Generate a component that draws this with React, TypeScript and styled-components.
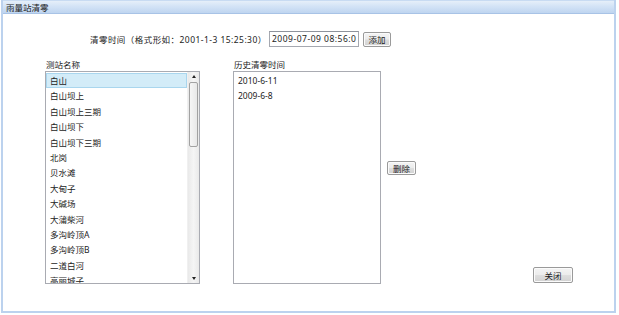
import React from "react";
import styled, { createGlobalStyle } from "styled-components";

const stations = [
  "白山",
  "白山坝上",
  "白山坝上三期",
  "白山坝下",
  "白山坝下三期",
  "北岗",
  "贝水滩",
  "大甸子",
  "大碱场",
  "大蒲柴河",
  "多沟岭顶A",
  "多沟岭顶B",
  "二道白河",
  "高丽城子",
];

const history = ["2010-6-11", "2009-6-8"];

const GlobalStyle = createGlobalStyle`
  html, body {
    margin: 0;
    padding: 0;
    background: #ffffff;
  }
  body {
    font-family: "Noto Sans", "Noto Sans CJK SC", sans-serif;
    font-size: 8.5px;
    color: #1c1c1c;
  }
`;

const App: React.FC = () => {
  return (
    <>
      <GlobalStyle />
      <Window>
        <TitleBar>雨量站清零</TitleBar>
        <Body>
          <TimeRow>
            <TimeLabel>清零时间（格式形如：2001-1-3 15:25:30）</TimeLabel>
            <TimeInput>2009-07-09 08:56:0</TimeInput>
            <Button $w={28} $h={15} $ml={4}>
              添加
            </Button>
          </TimeRow>

          <Main>
            <Column $w={155}>
              <FieldLabel>测站名称</FieldLabel>
              <ListBox>
                <ListItems>
                  {stations.map((s, i) => (
                    <Item key={s} $selected={i === 0}>
                      {s}
                    </Item>
                  ))}
                </ListItems>
                <ScrollBar>
                  <ArrowUp />
                  <ScrollTrack>
                    <Thumb />
                  </ScrollTrack>
                  <ArrowDown />
                </ScrollBar>
              </ListBox>
            </Column>

            <Column $w={148} $ml={33}>
              <FieldLabel>历史清零时间</FieldLabel>
              <ListBox>
                <ListItems>
                  {history.map((h) => (
                    <Item key={h}>{h}</Item>
                  ))}
                </ListItems>
              </ListBox>
            </Column>

            <Button $w={29} $h={14} $ml={6} $mt={102}>
              删除
            </Button>

            <Button $w={40} $h={16} $ml={117} $mt={208}>
              关闭
            </Button>
          </Main>
        </Body>
      </Window>
    </>
  );
};

export default App;

const Window = styled.div`
  margin-left: 1px;
  width: 615px;
  height: 313px;
  box-sizing: border-box;
  border: 2px solid #bcd2ee;
  border-top: none;
  background: #ffffff;
  display: flex;
  flex-direction: column;
`;

const TitleBar = styled.div`
  height: 14px;
  box-sizing: border-box;
  padding-left: 3px;
  line-height: 13px;
  font-size: 8.5px;
  color: #1a1a1a;
  background: linear-gradient(#e6eff9 0%, #d3e3f6 45%, #bfd5f0 100%);
  border-top: 1px solid #c8dbf2;
  border-bottom: 1px solid #a8c3e6;
`;

const Body = styled.div`
  flex: 1;
  display: flex;
  flex-direction: column;
`;

const TimeRow = styled.div`
  margin-top: 17px;
  padding-left: 87px;
  height: 16px;
  display: flex;
  align-items: center;
`;

const TimeLabel = styled.span`
  width: 179px;
  white-space: nowrap;
  letter-spacing: 0.45px;
`;

const TimeInput = styled.div`
  width: 90px;
  height: 16px;
  box-sizing: border-box;
  border: 1px solid #a5a8b0;
  border-top-color: #8e939c;
  padding: 0 2px;
  line-height: 14px;
  letter-spacing: 0.5px;
  overflow: hidden;
  white-space: nowrap;
  background: #ffffff;
`;

const Button = styled.div<{ $w: number; $h: number; $ml?: number; $mt?: number }>`
  width: ${(p) => p.$w}px;
  height: ${(p) => p.$h}px;
  margin-left: ${(p) => p.$ml ?? 0}px;
  margin-top: ${(p) => p.$mt ?? 0}px;
  flex-shrink: 0;
  box-sizing: border-box;
  border: 1px solid #9a9a9a;
  border-radius: 2px;
  background: linear-gradient(#f4f4f4 0%, #ececec 48%, #dedede 52%, #d2d2d2 100%);
  box-shadow: inset 0 0 0 1px #fbfbfb;
  display: flex;
  align-items: center;
  justify-content: center;
  font-size: 8.5px;
  color: #1c1c1c;
`;

const Main = styled.div`
  margin-top: 12px;
  padding-left: 42px;
  display: flex;
  align-items: flex-start;
`;

const Column = styled.div<{ $w: number; $ml?: number }>`
  width: ${(p) => p.$w}px;
  margin-left: ${(p) => p.$ml ?? 0}px;
  display: flex;
  flex-direction: column;
`;

const FieldLabel = styled.div`
  height: 12px;
  line-height: 11px;
  padding-left: 1px;
`;

const ListBox = styled.div`
  height: 213px;
  box-sizing: border-box;
  border: 1px solid #a9abb2;
  background: #ffffff;
  display: flex;
  overflow: hidden;
`;

const ListItems = styled.div`
  flex: 1;
  padding-top: 1px;
  overflow: hidden;
`;

const Item = styled.div<{ $selected?: boolean }>`
  height: 15.4px;
  box-sizing: border-box;
  line-height: 14.4px;
  padding-left: 3px;
  white-space: nowrap;
  border: 1px solid ${(p) => (p.$selected ? "#a9d6ee" : "transparent")};
  background: ${(p) => (p.$selected ? "#d3ecf8" : "transparent")};
`;

const ScrollBar = styled.div`
  width: 11px;
  display: flex;
  flex-direction: column;
  background: linear-gradient(90deg, #e9e9e9, #f5f5f5 50%, #e9e9e9);
  border-left: 1px solid #f0f0f0;
`;

const ArrowUp = styled.div`
  height: 9px;
  display: flex;
  align-items: center;
  justify-content: center;
  &::before {
    content: "";
    border-left: 2.5px solid transparent;
    border-right: 2.5px solid transparent;
    border-bottom: 3px solid #222;
  }
`;

const ArrowDown = styled(ArrowUp)`
  &::before {
    border-bottom: none;
    border-top: 3px solid #222;
  }
`;

const ScrollTrack = styled.div`
  flex: 1;
  padding: 1px 1px 0 1px;
`;

const Thumb = styled.div`
  height: 65px;
  box-sizing: border-box;
  border: 1px solid #a2a2a2;
  border-radius: 2px;
  background: linear-gradient(90deg, #f6f6f6, #e8e8e8);
`;
